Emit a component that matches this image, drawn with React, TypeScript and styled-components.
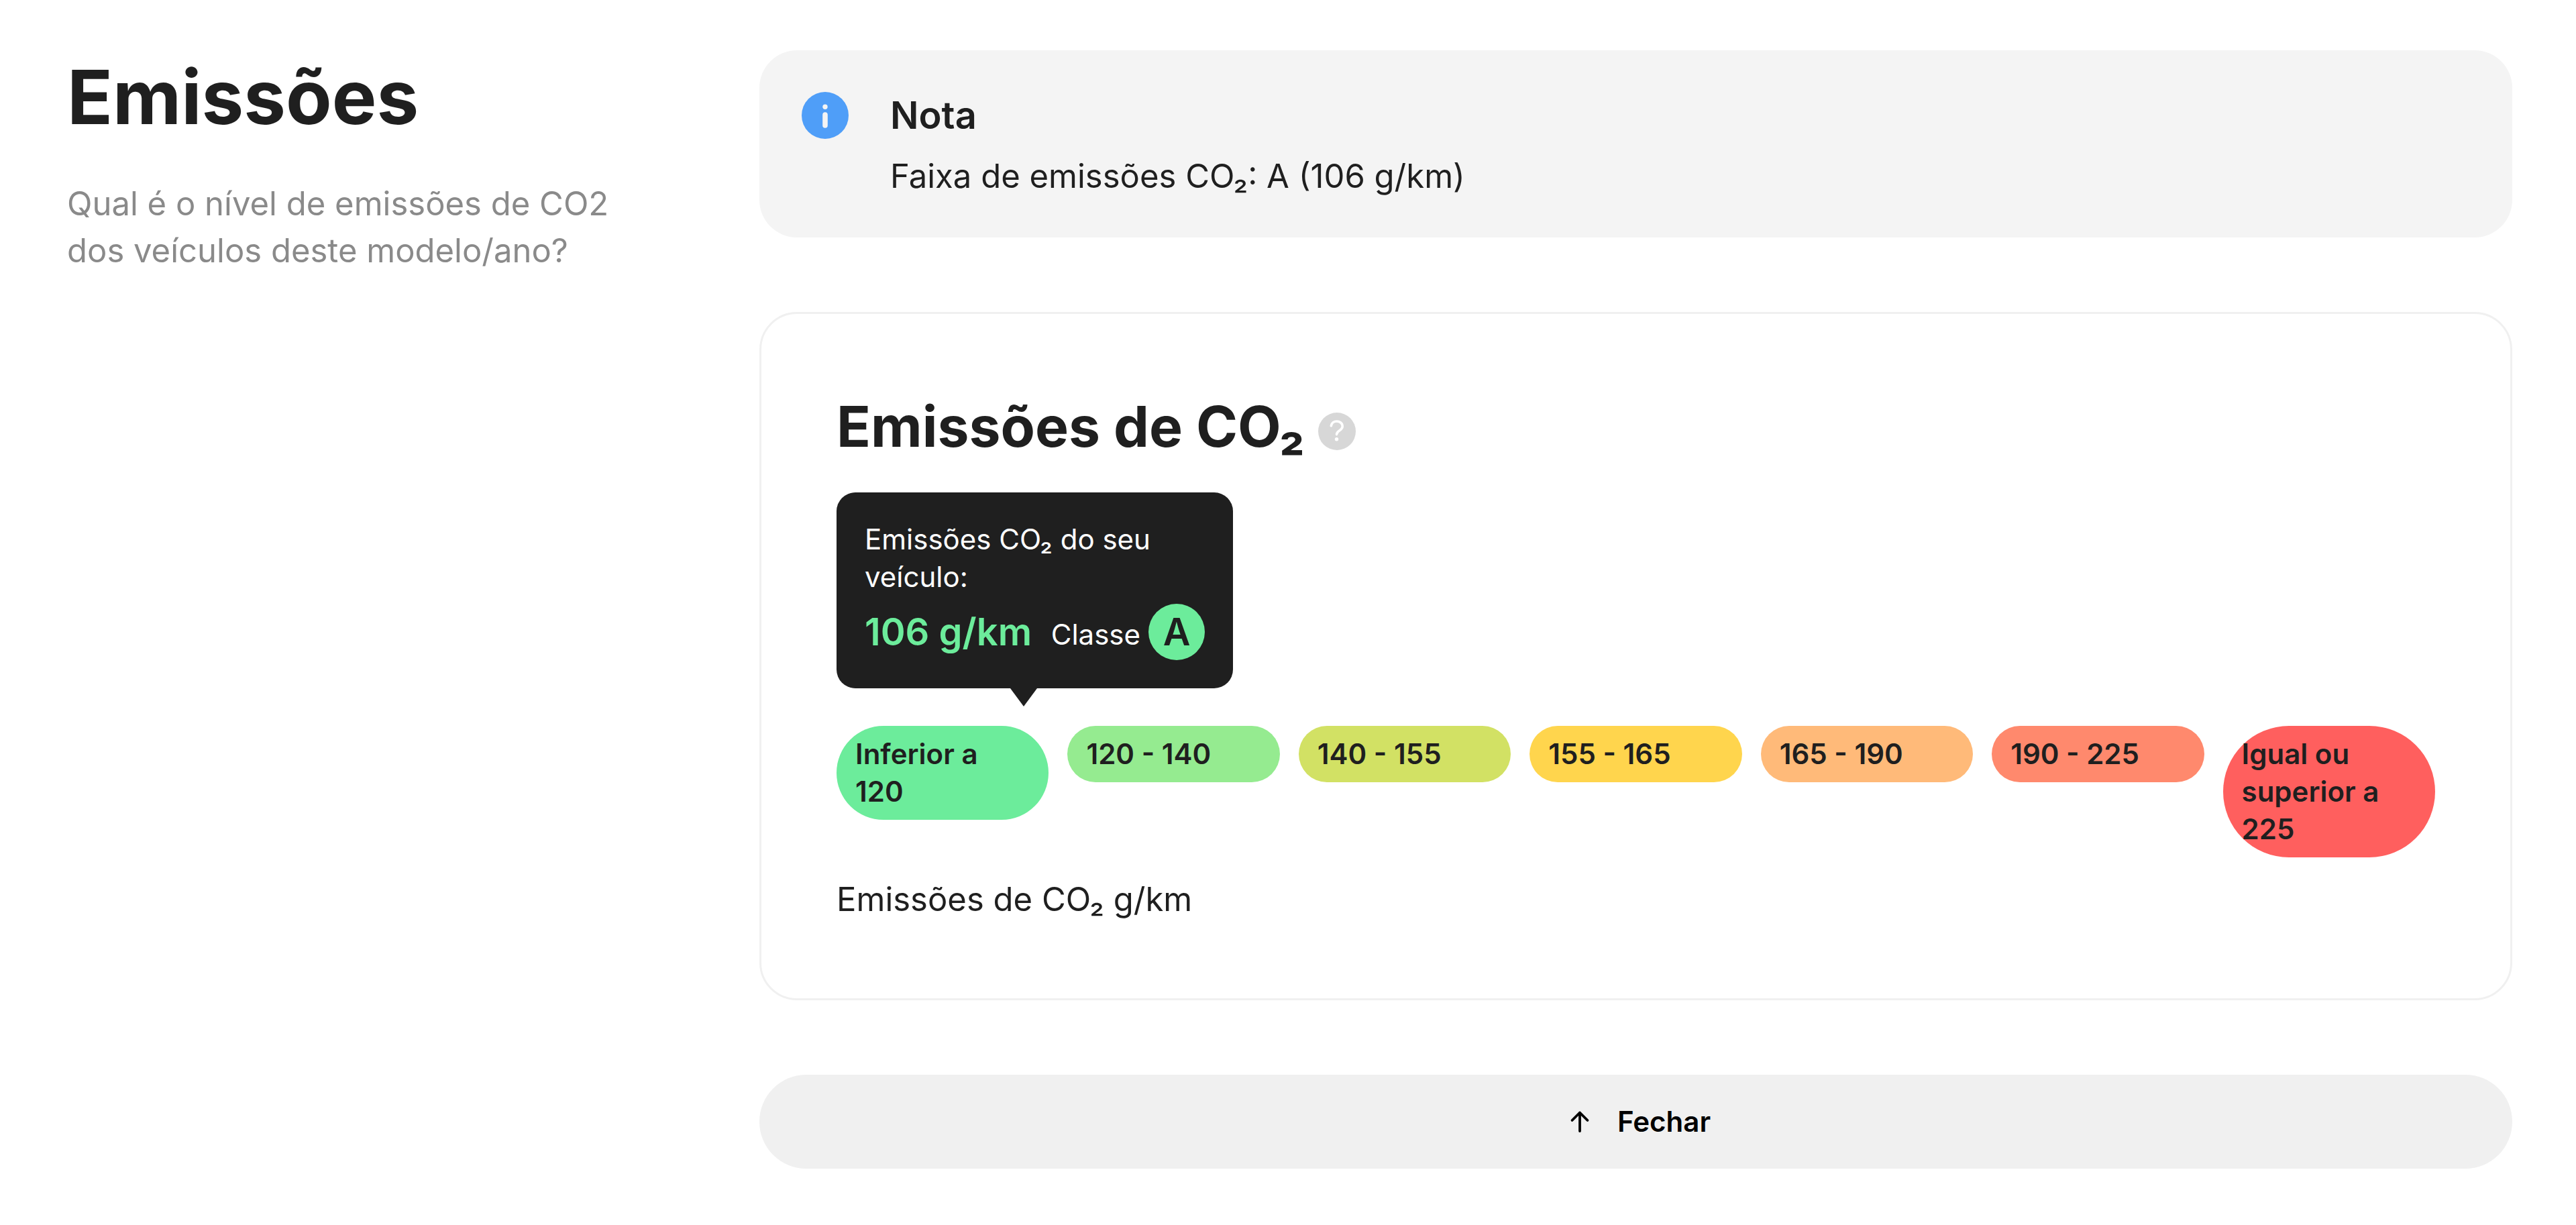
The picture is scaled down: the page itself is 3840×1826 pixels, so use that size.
import React from "react";
import styled, { createGlobalStyle } from "styled-components";

const ink = "#1f1f1f";

const GlobalStyle = createGlobalStyle`
  *, *::before, *::after { box-sizing: border-box; }
  body {
    margin: 0;
    background: #fff;
    color: ${ink};
    font-family: Inter, "Liberation Sans", sans-serif;
    font-size: 49px;
    line-height: 70px;
  }
  h1, h2, h3, p, ul { margin: 0; padding: 0; }
`;

const Page = styled.main`
  display: flex;
  align-items: flex-start;
  gap: 168px;
  padding: 75px 95px 84px 100px;
`;

const Intro = styled.header`
  flex: 0 1 864px;
`;

const Title = styled.h1`
  margin-bottom: 56px;
  font-size: 112px;
  line-height: 138px;
  font-weight: 700;
`;

const Lead = styled.p`
  max-width: 840px;
  color: #8a8a8a;
`;

const Content = styled.div`
  flex: 1;
  min-width: 0;
  display: flex;
  flex-direction: column;
  gap: 111px;
`;

const Note = styled.aside`
  display: flex;
  gap: 62px;
  padding: 62px 63px 56px;
  border-radius: 56px;
  background: #f4f4f4;
`;

const NoteIcon = styled.svg`
  flex: none;
  width: 70px;
  height: 70px;
`;

const NoteBody = styled.div`
  display: flex;
  flex-direction: column;
  gap: 21px;
`;

const NoteTitle = styled.h3`
  font-size: 56px;
  line-height: 70px;
  font-weight: 600;
`;

const Card = styled.section`
  padding: 112px;
  border: 3px solid #f0f0f0;
  border-radius: 56px;
`;

const CardHeader = styled.div`
  display: flex;
  align-items: center;
  gap: 20px;
  margin-bottom: 42px;
`;

const CardTitle = styled.h2`
  font-size: 84px;
  line-height: 112px;
  font-weight: 700;
`;

const HelpButton = styled.button`
  width: 56px;
  height: 56px;
  margin-top: 14px;
  padding: 0;
  border: 0;
  background: none;
  svg { display: block; width: 100%; height: 100%; }
`;

const Callout = styled.div`
  position: relative;
  width: 591px;
  margin-bottom: 56px;
  padding: 42px;
  border-radius: 28px;
  background: ${ink};
  color: #fff;
  font-size: 42px;
  line-height: 56px;

  &::after {
    content: "";
    position: absolute;
    top: 100%;
    left: 259px;
    border: solid transparent;
    border-width: 27px 20px 0;
    border-top-color: ${ink};
  }
`;

const CalloutRow = styled.div`
  display: flex;
  align-items: center;
  justify-content: space-between;
  margin-top: 12px;
  white-space: nowrap;
`;

const Reading = styled.strong`
  color: #6cec9b;
  font-size: 56px;
  font-weight: 600;
`;

const Rating = styled.span`
  display: flex;
  align-items: center;
  gap: 12px;
`;

const RatingLabel = styled.span`
  padding-top: 8px;
`;

const Grade = styled.strong`
  width: 84px;
  border-radius: 50%;
  background: #6cec9b;
  color: ${ink};
  font-size: 56px;
  line-height: 84px;
  font-weight: 600;
  text-align: center;
`;

const Scale = styled.ul`
  display: grid;
  grid-template-columns: repeat(7, minmax(0, 1fr));
  align-items: start;
  gap: 28px;
  margin-bottom: 28px;
  list-style: none;
`;

const Band = styled.li<{ $color: string }>`
  padding: 14px 28px;
  border-radius: 98px;
  background: ${(p) => p.$color};
  font-size: 42px;
  line-height: 56px;
  font-weight: 600;
`;

const CloseButton = styled.button`
  display: flex;
  align-items: center;
  justify-content: center;
  gap: 28px;
  padding: 42px;
  border: 0;
  border-radius: 70px;
  background: #f0f0f0;
  color: #000;
  font-family: inherit;
  font-size: 42px;
  line-height: 56px;
  font-weight: 600;
  svg { width: 56px; height: 56px; }
`;

const bands = [
  { label: "Inferior a 120", color: "#6cec9b" },
  { label: "120 - 140", color: "#95eb90" },
  { label: "140 - 155", color: "#d2e164" },
  { label: "155 - 165", color: "#ffd54d" },
  { label: "165 - 190", color: "#ffba79" },
  { label: "190 - 225", color: "#ff896d" },
  { label: "Igual ou superior a 225", color: "#ff5f5e" },
];

export default function App() {
  return (
    <>
      <GlobalStyle />
      <Page>
        <Intro>
          <Title>Emissões</Title>
          <Lead>Qual é o nível de emissões de CO2 dos veículos deste modelo/ano?</Lead>
        </Intro>
        <Content>
          <Note>
            <NoteIcon viewBox="0 0 70 70" aria-hidden="true">
              <circle cx="35" cy="35" r="35" fill="#4f9ef8" />
              <circle cx="35" cy="22.3" r="3.7" fill="#f4f4f4" />
              <path d="M35 34v16" stroke="#f4f4f4" strokeWidth="7.6" strokeLinecap="round" />
            </NoteIcon>
            <NoteBody>
              <NoteTitle>Nota</NoteTitle>
              <p>Faixa de emissões CO₂: A (106 g/km)</p>
            </NoteBody>
          </Note>
          <Card>
            <CardHeader>
              <CardTitle>Emissões de CO₂</CardTitle>
              <HelpButton type="button" aria-label="Ajuda">
                <svg viewBox="0 0 56 56" aria-hidden="true">
                  <circle cx="28" cy="28" r="28" fill="#d7d7d7" />
                  <path
                    d="M19.300 19.800C20 15.500 23.500 13 27.800 13s8.400 2.800 8.400 7.600c0 6.600-8.700 5.600-8.700 12"
                    fill="none"
                    stroke="#fff"
                    strokeWidth="3.600"
                    strokeLinecap="round"
                  />
                  <circle cx="27.500" cy="39.800" r="2.700" fill="#fff" />
                </svg>
              </HelpButton>
            </CardHeader>
            <Callout>
              <p>Emissões CO₂ do seu veículo:</p>
              <CalloutRow>
                <Reading>106 g/km</Reading>
                <Rating>
                  <RatingLabel>Classe</RatingLabel>
                  <Grade>A</Grade>
                </Rating>
              </CalloutRow>
            </Callout>
            <Scale>
              {bands.map((band) => (
                <Band key={band.label} $color={band.color}>
                  {band.label}
                </Band>
              ))}
            </Scale>
            <p>Emissões de CO₂ g/km</p>
          </Card>
          <CloseButton type="button">
            <svg
              viewBox="0 0 56 56"
              fill="none"
              stroke="currentColor"
              strokeWidth="3.800"
              strokeLinecap="round"
              strokeLinejoin="round"
              aria-hidden="true"
            >
              <path d="M28 42V14.500M16.500 26 28 14.500 39.500 26" />
            </svg>
            Fechar
          </CloseButton>
        </Content>
      </Page>
    </>
  );
}
